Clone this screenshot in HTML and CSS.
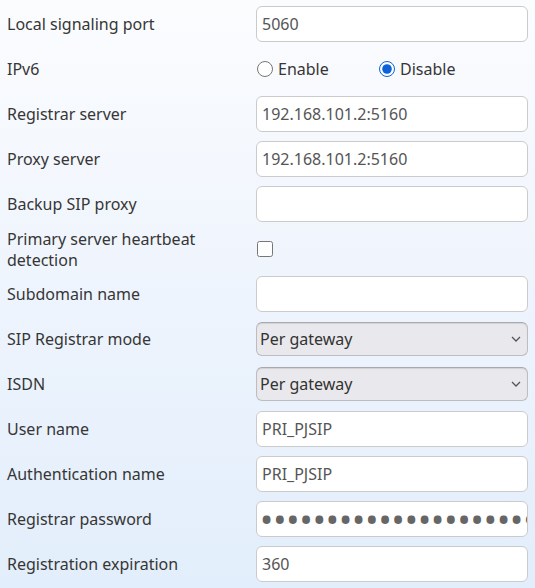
FILE: index.html
```html
<!DOCTYPE html>
<html>
<head>
<meta charset="utf-8">
<link rel="stylesheet" href="styles.css">
</head>
<body>
<div class="form">
  <div class="row"><div class="label">Local signaling port</div><div class="field"><input class="text" type="text" value="5060"></div></div>
  <div class="row"><div class="label">IPv6</div><div class="field radios">
    <label class="radio r1"><input type="radio" name="ipv6">Enable</label>
    <label class="radio"><input type="radio" name="ipv6" checked>Disable</label>
  </div></div>
  <div class="row"><div class="label">Registrar server</div><div class="field"><input class="text" type="text" value="192.168.101.2:5160"></div></div>
  <div class="row"><div class="label">Proxy server</div><div class="field"><input class="text" type="text" value="192.168.101.2:5160"></div></div>
  <div class="row"><div class="label">Backup SIP proxy</div><div class="field"><input class="text" type="text" value=""></div></div>
  <div class="row"><div class="label">Primary server heartbeat detection</div><div class="field"><input class="check" type="checkbox"></div></div>
  <div class="row"><div class="label">Subdomain name</div><div class="field"><input class="text" type="text" value=""></div></div>
  <div class="row"><div class="label">SIP Registrar mode</div><div class="field selwrap"><select class="sel"><option>Per gateway</option></select><svg class="chev" width="10" height="6" viewBox="0 0 10 6"><path d="M1 1 L5 5 L9 1" fill="none" stroke="#555" stroke-width="1.3"/></svg></div></div>
  <div class="row"><div class="label">ISDN</div><div class="field selwrap"><select class="sel"><option>Per gateway</option></select><svg class="chev" width="10" height="6" viewBox="0 0 10 6"><path d="M1 1 L5 5 L9 1" fill="none" stroke="#555" stroke-width="1.3"/></svg></div></div>
  <div class="row"><div class="label">User name</div><div class="field"><input class="text" type="text" value="PRI_PJSIP"></div></div>
  <div class="row"><div class="label">Authentication name</div><div class="field"><input class="text" type="text" value="PRI_PJSIP"></div></div>
  <div class="row"><div class="label">Registrar password</div><div class="field"><input class="text pw" type="password" value="abcdefghijklmnopqrstuvwxyz0123"></div></div>
  <div class="row"><div class="label">Registration expiration</div><div class="field"><input class="text" type="text" value="360"></div></div>
</div>
</body>
</html>
```

FILE: styles.css
```css
html, body {
  margin: 0;
  padding: 0;
  height: 100%;
}
body {
  background: linear-gradient(to bottom, #fbfcfe 0%, #eef4fd 50%, #e2eefb 100%);
  font-family: "Noto Sans", "Open Sans", sans-serif;
  font-size: 16px;
  color: #363636;
  overflow: hidden;
}
.form {
  padding: 1px 0 0 7px;
}
.row {
  display: grid;
  grid-template-columns: 249px 272px;
  align-items: center;
  height: 45px;
}
.label {
  line-height: 21px;
  padding: 2px 20px 0 0;
}
.field {
  display: flex;
  align-items: center;
}
.text {
  box-sizing: border-box;
  width: 272px;
  height: 36px;
  border: 1px solid #cbcbcb;
  border-radius: 6px;
  background: #fff;
  padding: 0 5px;
  font-family: inherit;
  font-size: 16px;
  color: #555;
  outline: none;
}
.pw {
  font-size: 35px;
  letter-spacing: 0;
  padding: 0 0 0 3px;
  color: #666;
}
.selwrap {
  position: relative;
}
.sel {
  -webkit-appearance: none;
  appearance: none;
  box-sizing: border-box;
  width: 272px;
  height: 34px;
  border: 1px solid #bdbdc1;
  border-top-color: #a9a9ad;
  border-radius: 6px;
  background-color: #e9e8ec;
  box-shadow: inset 0 1px 1px rgba(0,0,0,0.1);
  padding: 0 0 0 3px;
  font-family: inherit;
  font-size: 16px;
  color: #333;
}
.chev {
  position: absolute;
  left: 255px;
  top: 14px;
  pointer-events: none;
}
.radio {
  display: flex;
  align-items: center;
  color: #363636;
}
.radio input {
  margin: 0 5px 0 1px;
  width: 16px;
  height: 16px;
  accent-color: #0b62d9;
}
.r1 {
  width: 122px;
}
.check {
  margin: 0 0 0 1px;
  width: 16px;
  height: 16px;
}
```
